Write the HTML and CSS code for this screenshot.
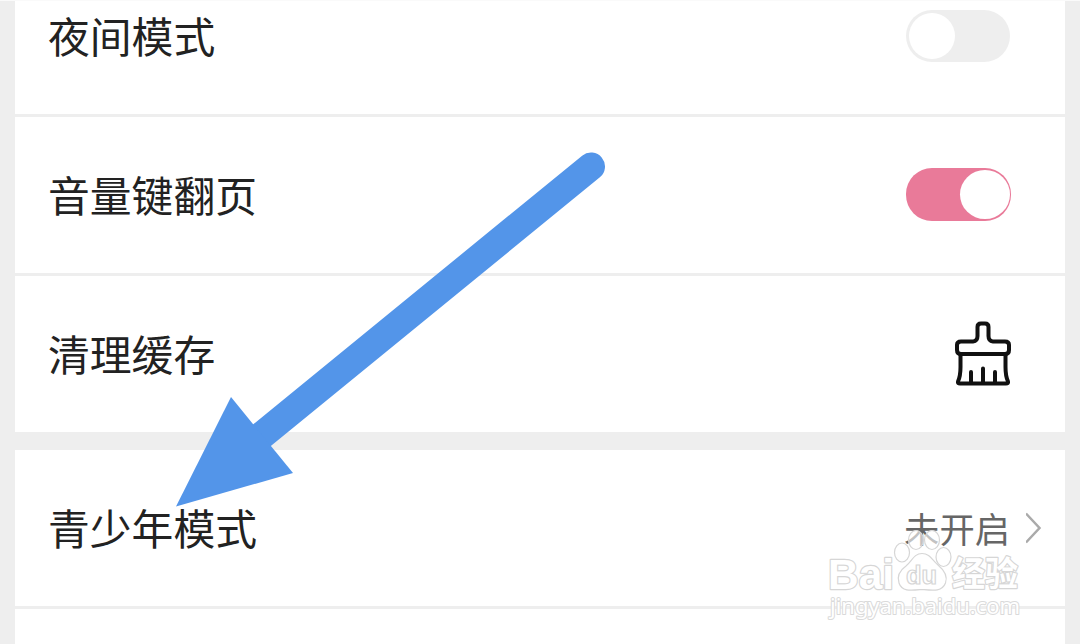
FILE: index.html
```
<!DOCTYPE html>
<html lang="zh-CN">
<head>
    <meta charset="UTF-8">
    <meta name="viewport" content="width=device-width, initial-scale=1.0">
    <title>设置</title>
    <link rel="stylesheet" href="styles.css">
</head>
<body>

<div class="settings">
    <div class="group">
        <div class="row row-first">
            <span class="label">夜间模式</span>
            <span class="switch"></span>
        </div>
        <div class="row">
            <span class="label">音量键翻页</span>
            <span class="switch switch-on"></span>
        </div>
        <div class="row">
            <span class="label">清理缓存</span>
            <svg class="brush" width="58" height="66" viewBox="0 0 58 66">
                <path d="M6.500 33.500V46Q6.500 55 4 60.500Q3.500 62.500 6 62.500H52Q54.500 62.500 54 60.500Q51.500 55 51.500 46V33.500"/>
                <path d="M7 20.500H19Q23.500 20 23.500 15V6Q23.500 2.500 27 2.500H31Q34.500 2.500 34.500 6V15Q34.500 20 39 20.500H51Q55 20.500 55 24V29Q55 33 51 33H7Q3 33 3 29V24Q3 20.500 7 20.500Z"/>
                <path d="M17 51V61M29 47.500V61M41 51V61" stroke-linecap="round"/>
            </svg>
        </div>
    </div>

    <div class="group">
        <div class="row">
            <span class="label">青少年模式</span>
            <span class="value">未开启</span>
            <svg class="chevron" width="16" height="32" viewBox="0 0 16 32">
                <path d="M0 1.500L13.500 16L0 30.500"/>
            </svg>
        </div>
        <div class="row row-last"></div>
    </div>
</div>

<!-- pointer arrow -->
<svg class="arrow" width="1080" height="644" viewBox="0 0 1080 644">
    <path class="arrow-shaft" d="M591 166.500L250 445"/>
    <path class="arrow-head" d="M176 506.500L231 397L293 473Z"/>
</svg>

<!-- watermark -->
<svg class="watermark" width="210" height="100" viewBox="820 530 210 100">
    <g class="mark">
        <text class="mark-latin" x="828" y="588.500" font-size="43" textLength="66" lengthAdjust="spacingAndGlyphs">Bai</text>
        <ellipse cx="902" cy="552.500" rx="7.500" ry="9.500"/>
        <ellipse cx="916" cy="540" rx="7.500" ry="9.500"/>
        <ellipse cx="932" cy="540" rx="7.500" ry="9.500"/>
        <ellipse cx="943.500" cy="557" rx="7.500" ry="9.500"/>
        <path d="M922 553.500C914 553.500 912 561 906 566C899 571 897 577 899 583C902 592 911 590.500 922 589.500C933 590.500 942 592 945.500 583C948 576 944 570 938 565C932 560 930 553.500 922 553.500Z"/>
        <text class="mark-du" x="906" y="583.500" font-size="25" textLength="31" lengthAdjust="spacingAndGlyphs">du</text>
        <text class="mark-cjk" x="952" y="586" font-size="34" textLength="66" lengthAdjust="spacingAndGlyphs">经验</text>
        <text class="mark-url" x="830" y="614" font-size="21" textLength="190" lengthAdjust="spacingAndGlyphs">jingyan.baidu.com</text>
    </g>
</svg>

</body>
</html>
```
FILE: styles.css
```
body {
    margin: 0;
    height: 644px;
    overflow: hidden;
    background: #eee;
    font-family: "Noto Sans CJK SC", sans-serif;
}

.settings {
    height: 643px;
    padding: 0 15px;
    border-top: 1px solid #fafafa;
    overflow: hidden;
}

.group {
    margin-bottom: 18px;
    background: #fff;
}

.row {
    box-sizing: border-box;
    height: 156px;
    padding: 0 54px 0 33px;
    display: flex;
    align-items: center;
}

.row + .row {
    height: 159px;
    border-top: 3px solid #eee;
}

/* scrolled partly out of view */
.row-first {
    height: 113px;
    padding-bottom: 43px;
}

.label {
    flex: 1;
    padding-bottom: 2px;
    font-size: 41.800px;
    line-height: 60px;
    color: #222;
}

.value {
    padding-bottom: 1px;
    font-size: 35.300px;
    line-height: 50px;
    color: #666;
}

.switch {
    box-sizing: border-box;
    width: 104px;
    height: 52px;
    margin-right: 1px;
    padding: 3px;
    border-radius: 26px;
    background: #eee;
    display: flex;
}

.switch::before {
    content: "";
    width: 46px;
    height: 46px;
    border-radius: 50%;
    background: #fff;
}

.switch-on {
    width: 105px;
    height: 53px;
    margin-right: 0;
    margin-bottom: 2px;
    padding: 2px 1px 2px 2px;
    justify-content: flex-end;
    background: #e97a99;
}

.switch-on::before {
    width: 50px;
    height: 49px;
}

.brush {
    margin-right: -1px;
    fill: none;
    stroke: #111;
    stroke-width: 4;
    stroke-linejoin: round;
}

.chevron {
    margin: 0 -31px 0 16px;
    fill: none;
    stroke: #aaa;
    stroke-width: 2.500;
}

.arrow {
    position: absolute;
    top: 0;
    left: 0;
}

.arrow-shaft {
    fill: none;
    stroke: #5395e9;
    stroke-width: 28;
    stroke-linecap: round;
}

.arrow-head {
    fill: #5395e9;
}

.watermark {
    position: absolute;
    left: 820px;
    top: 530px;
}

.mark {
    fill: rgba(255, 255, 255, 0.600);
    stroke: #d6d6d6;
    stroke-width: 1.200;
}

.mark-latin,
.mark-du {
    font-family: "Liberation Sans", sans-serif;
    font-weight: bold;
}

.mark-cjk {
    font-family: "Noto Sans CJK SC", sans-serif;
    font-weight: bold;
}

/* white letters with a thin grey halo */
.mark-latin,
.mark-cjk,
.mark-url {
    fill: #fff;
    stroke-width: 2.400;
    stroke-linejoin: round;
    paint-order: stroke;
}

.mark-url {
    font-family: "Noto Sans", sans-serif;
    font-weight: 400;
    stroke: #dadada;
    stroke-width: 2;
}
```
